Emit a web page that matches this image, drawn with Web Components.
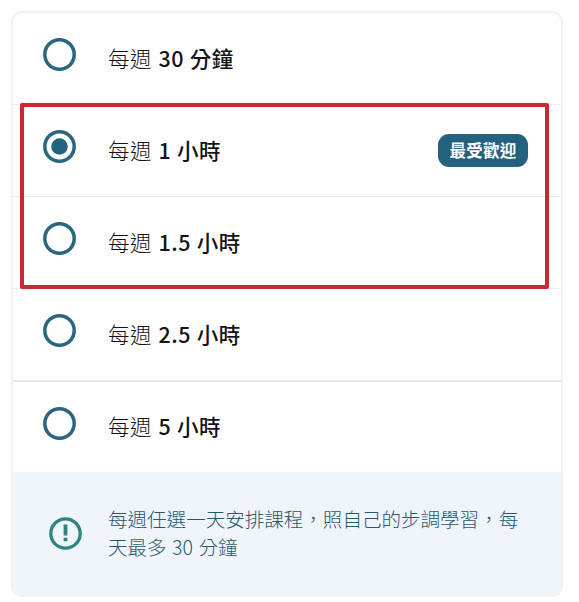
<!DOCTYPE html>
<html lang="zh-Hant">
<head>
<meta charset="utf-8">
<title>每週課程時數</title>
<style>
    body {
        margin: 0;
        padding: 11px 16px 0 11px;
        background: #fff;
        color: #141414;
        font-family: "Noto Sans CJK TC", "Noto Sans", sans-serif;
    }
</style>
</head>
<body>
<plan-card>
    <plan-option amount="30 分鐘">每週</plan-option>
    <plan-option amount="1 小時" checked>每週<plan-badge slot="badge">最受歡迎</plan-badge></plan-option>
    <plan-option amount="1.5 小時">每週</plan-option>
    <plan-option amount="2.5 小時" last>每週</plan-option>
    <plan-option amount="5 小時" plain>每週</plan-option>
    <plan-note slot="note">每週任選一天安排課程，照自己的步調學習，每天最多 30 分鐘</plan-note>
    <highlight-frame slot="overlay"></highlight-frame>
</plan-card>

<script>
class PlanCard extends HTMLElement {
    constructor() {
        super();
        this.attachShadow({ mode: 'open' });
        this.shadowRoot.innerHTML = `
            <style>
                :host {
                    display: block;
                    position: relative;
                    box-sizing: border-box;
                    height: 586px;
                    border: 2px solid #f1f1f2;
                    border-radius: 11px;
                    background: #fff;
                }
            </style>
            <slot></slot>
            <slot name="note"></slot>
            <slot name="overlay"></slot>
        `;
    }
}

class PlanOption extends HTMLElement {
    constructor() {
        super();
        this.attachShadow({ mode: 'open' });
        const amount = this.getAttribute('amount') || '';
        const dot = this.hasAttribute('checked') ? '<circle cx="16.5" cy="16.5" r="8.3" fill="#23637f"/>' : '';

        this.shadowRoot.innerHTML = `
            <style>
                :host {
                    display: flex;
                    box-sizing: border-box;
                    height: 92px;
                    padding: 0 33px 0 30px;
                    border-bottom: 1px solid #ececec;
                }
                :host([last]) {
                    height: 93px;
                    border-bottom: 2px solid #e6e6e6;
                }
                :host([plain]) {
                    height: 90px;
                    border-bottom: 0;
                }
                :host([plain]) .label {
                    padding-top: 29px;
                }
                svg {
                    flex: none;
                    margin: 25px 32px 0 0;
                }
                .label {
                    flex: 1;
                    padding-top: 30px;
                    font-size: 21.5px;
                    line-height: 30px;
                    letter-spacing: 0.5px;
                    font-weight: 300;
                    white-space: nowrap;
                }
                .amount {
                    margin-left: 6.5px;
                    font-weight: 500;
                    word-spacing: 0.5px;
                }
                ::slotted(plan-badge) {
                    margin-top: 29px;
                }
            </style>
            <svg width="33" height="33" viewBox="0 0 33 33">
                <circle cx="16.5" cy="16.5" r="14.7" fill="none" stroke="#2b657f" stroke-width="3.5"/>
                ${dot}
            </svg>
            <div class="label"><slot></slot><span class="amount">${amount}</span></div>
            <slot name="badge"></slot>
        `;
    }
}

class PlanBadge extends HTMLElement {
    constructor() {
        super();
        this.attachShadow({ mode: 'open' });
        this.shadowRoot.innerHTML = `
            <style>
                :host {
                    display: flex;
                    align-items: center;
                    justify-content: center;
                    box-sizing: border-box;
                    width: 90px;
                    height: 33px;
                    padding-bottom: 2px;
                    border-radius: 11px;
                    background: #23617f;
                    color: #fff;
                    font-size: 16.5px;
                    font-weight: 700;
                    letter-spacing: 0.2px;
                    white-space: nowrap;
                }
            </style>
            <slot></slot>
        `;
    }
}

class PlanNote extends HTMLElement {
    constructor() {
        super();
        this.attachShadow({ mode: 'open' });
        this.shadowRoot.innerHTML = `
            <style>
                :host {
                    display: flex;
                    align-items: center;
                    box-sizing: border-box;
                    height: 123px;
                    padding: 0 36px 0 36px;
                    border-radius: 0 0 9px 9px;
                    background: #eff5fb;
                    color: #26586d;
                }
                svg {
                    flex: none;
                    margin-right: 26px;
                }
                .text {
                    padding-bottom: 2px;
                    font-size: 19.55px;
                    line-height: 28px;
                    font-weight: 300;
                    word-spacing: 1.2px;
                }
            </style>
            <svg width="33" height="33" viewBox="0 0 33 33">
                <circle cx="16.5" cy="16.5" r="14.7" fill="none" stroke="#2a8583" stroke-width="3.3"/>
                <path d="M14.6 7.4h3.8v11h-3.8zM14.6 20.8h3.8v3.4h-3.8z" fill="#2a8583"/>
            </svg>
            <div class="text"><slot></slot></div>
        `;
    }
}

// Red marker drawn over the two recommended rows
class HighlightFrame extends HTMLElement {
    constructor() {
        super();
        this.attachShadow({ mode: 'open' });
        this.shadowRoot.innerHTML = `
            <style>
                :host {
                    position: absolute;
                    box-sizing: border-box;
                    left: 7px;
                    top: 90px;
                    width: 529px;
                    height: 186px;
                    border: 4px solid #c92a32;
                    border-radius: 2px;
                    pointer-events: none;
                }
            </style>
        `;
    }
}

customElements.define('plan-card', PlanCard);
customElements.define('plan-option', PlanOption);
customElements.define('plan-badge', PlanBadge);
customElements.define('plan-note', PlanNote);
customElements.define('highlight-frame', HighlightFrame);
</script>
</body>
</html>
